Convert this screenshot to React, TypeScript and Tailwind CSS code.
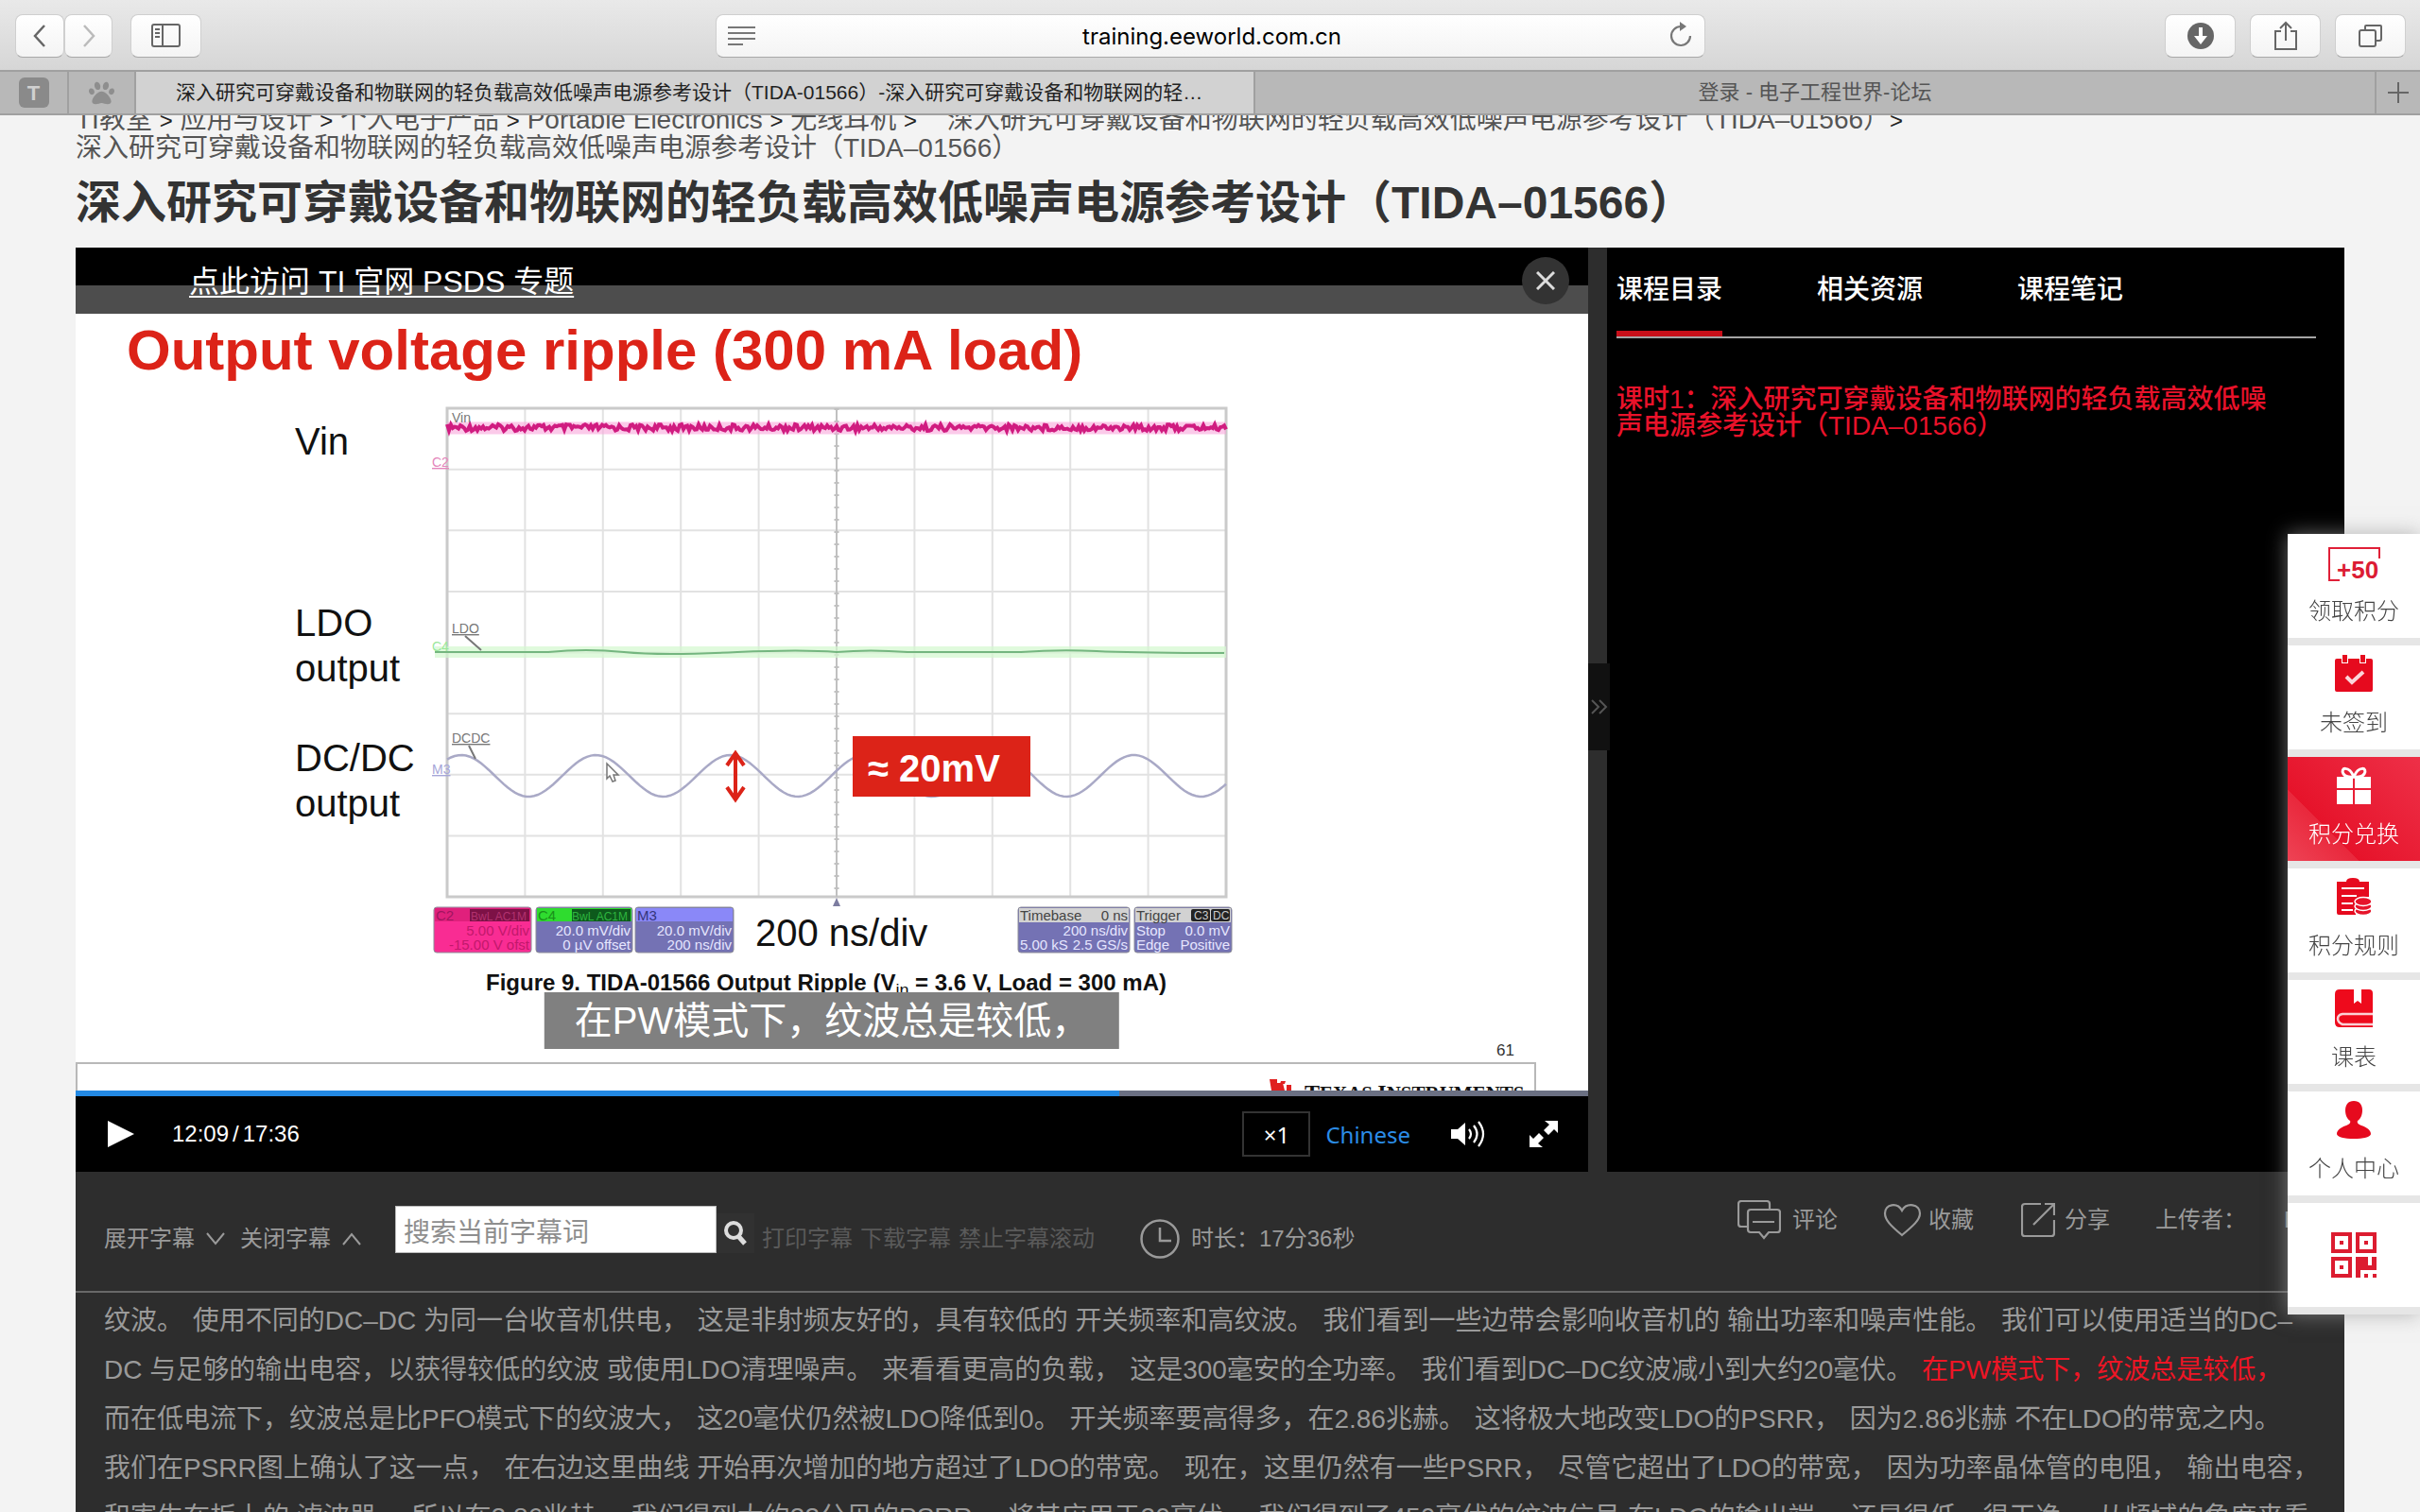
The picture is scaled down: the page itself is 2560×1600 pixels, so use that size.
import { FaPaw } from "react-icons/fa";

const GRID = { x: 393, y: 100, w: 824, h: 517, cols: 10, rows: 8 };

// steady pseudo noise for the supply trace
function noise(i: number): number {
  const v = Math.sin(i * 12.9898) * 43758.5453;
  return v - Math.floor(v);
}

function vinPath(): string {
  let d = "";
  for (let i = 0; i <= 412; i++) {
    d += `${i ? "L" : "M"}${GRID.x + i * 2} ${(117 + noise(i) * 7).toFixed(1)}`;
  }
  return d;
}

function dcdcPath(): string {
  let d = "";
  for (let x = GRID.x; x <= GRID.x + GRID.w; x += 4) {
    const y = 489 - 22 * Math.cos((2 * Math.PI * (x - 408)) / 142.3);
    d += `${x > GRID.x ? "L" : "M"}${x} ${y.toFixed(1)}`;
  }
  return d;
}

function range(n: number): number[] {
  return Array.from({ length: n }, (_, i) => i);
}

const boxes = [
  { x: 379, w: 103, head: "#e0207c", body: "#f92c93", left: "C2", ink: "#a01560", rows: ["5.00 V/div", "-15.00 V ofst"] },
  { x: 487, w: 102, head: "#2fdc2f", body: "#7472b4", left: "C4", ink: "#1a8f1a", rows: ["20.0 mV/div", "0 µV offset"] },
  { x: 592, w: 104, head: "#8a88f8", body: "#7472b4", left: "M3", ink: "#35357a", rows: ["20.0 mV/div", "200 ns/div"] },
];

function Slide() {
  return (
    <svg
      viewBox="0 0 1600 822"
      className="block w-full bg-white"
      fontFamily="'Liberation Sans', sans-serif"
      role="img"
      aria-label="Output voltage ripple (300 mA load)"
    >
      <text x="54" y="59" fontSize="60" fontWeight="700" fill="#dc2318">
        Output voltage ripple (300 mA load)
      </text>
      <g fontSize="40" fill="#111">
        <text x="232" y="149">Vin</text>
        <text x="232" y="341">LDO</text>
        <text x="232" y="389">output</text>
        <text x="232" y="484">DC/DC</text>
        <text x="232" y="532">output</text>
        <text x="719" y="669">200 ns/div</text>
      </g>

      <g stroke="#e2e2e2" strokeWidth="2">
        {range(GRID.cols - 1).map((i) => {
          const x = GRID.x + ((i + 1) * GRID.w) / GRID.cols;
          return <line key={i} x1={x} x2={x} y1={GRID.y} y2={GRID.y + GRID.h} />;
        })}
        {range(GRID.rows - 1).map((i) => {
          const y = GRID.y + ((i + 1) * GRID.h) / GRID.rows;
          return <line key={i} y1={y} y2={y} x1={GRID.x} x2={GRID.x + GRID.w} />;
        })}
      </g>
      <rect x={GRID.x} y={GRID.y} width={GRID.w} height={GRID.h} fill="none" stroke="#cacaca" strokeWidth="3" />
      <line x1="805" x2="805" y1="100" y2="617" stroke="#c0c0c0" strokeWidth="2" />
      <line x1="805" x2="805" y1="100" y2="617" stroke="#c0c0c0" strokeWidth="5" strokeDasharray="2 11" />
      <path d="M805 618l-4 9h8z" fill="#7c7ca0" />

      <path d="M393 121H1217" stroke="#f9a8dc" strokeWidth="13" opacity="0.6" />
      <path d={vinPath()} fill="none" stroke="#d01c80" strokeWidth="4" />
      <path d="M380 358H1217" stroke="#d4f8d0" strokeWidth="12" opacity="0.7" />
      <path
        d="M380 358H500Q540 354 580 358T700 358Q770 355 805 358Q840 355 880 358H1000Q1040 355 1080 357T1215 359"
        fill="none"
        stroke="#74b67f"
        strokeWidth="2"
      />
      <path d={dcdcPath()} fill="none" stroke="#a9a9c6" strokeWidth="2.5" />

      <g fontSize="14" fill="#777">
        <text x="398" y="115">Vin</text>
        <text x="398" y="338" textDecoration="underline">LDO</text>
        <text x="398" y="454" textDecoration="underline">DCDC</text>
        <text x="377" y="162" fill="#e486bb" textDecoration="underline">C2</text>
        <text x="377" y="357" fill="#9ae89a">C4</text>
        <text x="377" y="487" fill="#a6a6d8" textDecoration="underline">M3</text>
      </g>
      <path d="M412 341L429 356M416 457L423 471" stroke="#777" strokeWidth="2" />

      <g fill="none" stroke="#dc2318" strokeWidth="4">
        <path d="M698 466V513" />
        <path d="M689 478l9-13 9 13M689 501l9 13 9-13" />
      </g>
      <path d="M562 476v16l3-3 3 6 3-1-2-6h5z" fill="#fff" stroke="#777" strokeWidth="1.5" />
      <rect x="822" y="447" width="188" height="64" fill="#dc2318" />
      <text x="838" y="495" fontSize="40" fontWeight="700" fill="#fff">≈ 20mV</text>

      {boxes.map((b) => (
        <g key={b.left} fontSize="15">
          <rect x={b.x} y="628" width={b.w} height="48" rx="3" fill={b.body} stroke="#8c8c98" />
          <rect x={b.x + 1} y="629" width={b.w - 2} height="14" fill={b.head} />
          {b.left !== "M3" && (
            <>
              <rect x={b.x + 38} y="630" width={b.w - 40} height="13" fill={b.left === "C2" ? "#7d1146" : "#0d5a1c"} />
              <text x={b.x + b.w - 5} y="642" textAnchor="end" fontSize="12" fill={b.left === "C2" ? "#b2316f" : "#2fb53f"}>
                BwL AC1M
              </text>
            </>
          )}
          <text x={b.x + 2} y="642" fill={b.ink}>{b.left}</text>
          <g fill={b.left === "C2" ? "#c2186c" : "#e6e6ff"} textAnchor="end">
            <text x={b.x + b.w - 2} y="658">{b.rows[0]}</text>
            <text x={b.x + b.w - 2} y="673">{b.rows[1]}</text>
          </g>
        </g>
      ))}
      <g fontSize="15">
        <rect x="997" y="628" width="118" height="48" rx="3" fill="#7472b4" stroke="#8c8c98" />
        <rect x="998" y="629" width="116" height="15" fill="#d2d2d2" />
        <rect x="1120" y="628" width="103" height="48" rx="3" fill="#7472b4" stroke="#8c8c98" />
        <rect x="1121" y="629" width="101" height="15" fill="#d2d2d2" />
        <rect x="1180" y="630" width="20" height="13" rx="2" fill="#222" />
        <rect x="1201" y="630" width="20" height="13" rx="2" fill="#222" />
        <g fill="#444">
          <text x="999" y="642">Timebase</text>
          <text x="1113" y="642" textAnchor="end">0 ns</text>
          <text x="1122" y="642">Trigger</text>
        </g>
        <g fill="#ccc" fontSize="12">
          <text x="1183" y="641">C3</text>
          <text x="1203" y="641">DC</text>
        </g>
        <g fill="#e6e6ff">
          <text x="999" y="673">5.00 kS</text>
          <text x="1122" y="658">Stop</text>
          <text x="1122" y="673">Edge</text>
          <g textAnchor="end">
            <text x="1113" y="658">200 ns/div</text>
            <text x="1113" y="673">2.5 GS/s</text>
            <text x="1221" y="658">0.0 mV</text>
            <text x="1221" y="673">Positive</text>
          </g>
        </g>
      </g>

      <text x="434" y="716" fontSize="24" fontWeight="700" fill="#111">
        Figure 9. TIDA-01566 Output Ripple (V
        <tspan fontSize="18" fontWeight="400" dy="6">in</tspan>
        <tspan dy="-6"> = 3.6 V, Load = 300 mA)</tspan>
      </text>
      <text x="1503" y="785" fontSize="17" fill="#333">61</text>
      <path d="M1 822V793H1544V822" fill="none" stroke="#b8b8b8" strokeWidth="2" />
      <path d="M1263 810h8v4h6l2 8h-14zM1281 816h5v6h-5z" fill="#e02020" />
      <path d="M1275 812h5l-1 3h-5z" fill="#e02020" />
      <g fontFamily="'Liberation Serif', serif" fontWeight="700" fill="#111">
        <text x="1300" y="832" fontSize="24">
          T<tspan fontSize="21">EXAS </tspan>I<tspan fontSize="21">NSTRUMENTS</tspan>
        </text>
      </g>
    </svg>
  );
}

function BrowserBar() {
  const button =
    "flex h-[46px] items-center justify-center rounded-[8px] border border-[#cfcfcf] border-b-[#a8a8a8] bg-gradient-to-b from-white to-[#f4f4f4]";
  return (
    <header className="relative z-10 shrink-0">
      <div className="grid h-[74px] grid-cols-[1fr_minmax(0,1047px)_1fr] items-center bg-gradient-to-b from-[#e9e9e9] to-[#d6d6d6] pt-[2px]">
        <div className="flex pl-4">
          <button aria-label="后退" className={`${button} w-[52px]`}>
            <svg width="16" height="28" fill="none" stroke="#666" strokeWidth="2.5"><path d="M13 3L3 14l10 11" /></svg>
          </button>
          <button aria-label="前进" className={`${button} w-[51px]`}>
            <svg width="16" height="28" fill="none" stroke="#bbb" strokeWidth="2.5"><path d="M3 3l10 11L3 25" /></svg>
          </button>
          <button aria-label="边栏" className={`${button} ml-[19px] w-[75px]`}>
            <svg width="32" height="26" fill="none" stroke="#666" strokeWidth="2">
              <rect x="1" y="1" width="29" height="23" rx="2" />
              <path d="M12 1v23M4 6h5M4 10h5M4 14h5" />
            </svg>
          </button>
        </div>
        <div className={`${button} px-3`}>
          <svg width="30" height="22" stroke="#777" strokeWidth="2"><path d="M0 2h29M0 8h29M0 14h29M0 20h16" /></svg>
          <input
            aria-label="地址"
            defaultValue="training.eeworld.com.cn"
            className="min-w-0 flex-1 bg-transparent pt-0.5 text-center font-['Inter',sans-serif] text-[24px] leading-[32px] text-black outline-none"
          />
          <button aria-label="重新载入">
            <svg width="26" height="30" fill="none" stroke="#777" strokeWidth="2.2">
              <path d="M23 15a10 10 0 1 1-10-10h2" />
              <path d="M12 0l7 5-7 5z" fill="#777" stroke="none" />
            </svg>
          </button>
        </div>
        <div className="flex justify-end gap-[15px] pr-[15px]">
          <button aria-label="下载" className={`${button} w-[75px]`}>
            <svg width="30" height="30"><circle cx="15" cy="15" r="14" fill="#666" /><path d="M13 6h4v9h5l-7 9-7-9h5z" fill="#fff" /></svg>
          </button>
          <button aria-label="共享" className={`${button} w-[75px]`}>
            <svg width="26" height="32" fill="none" stroke="#666" strokeWidth="2">
              <path d="M8 11H2v19h22V11h-6M13 21V3M7 8l6-6 6 6" />
            </svg>
          </button>
          <button aria-label="标签页" className={`${button} w-[75px]`}>
            <svg width="28" height="26" fill="none" stroke="#666" strokeWidth="2">
              <rect x="2" y="7" width="17" height="17" rx="2" />
              <path d="M8 7V3q0-1 1-1h15q1 0 1 1v13q0 2-2 2h-4" />
            </svg>
          </button>
        </div>
      </div>
      <div className="grid h-12 grid-cols-[73px_71px_minmax(0,1fr)_minmax(0,1fr)_48px] border-y-2 border-[#a0a0a0] bg-[#b8b8b8]">
        <a href="#t" className="flex items-center justify-center border-r-2 border-[#a0a0a0]">
          <span className="flex h-8 w-8 items-center justify-center rounded-[6px] bg-[#8a8a8a] text-[22px] font-bold text-[#d0d0d0]">T</span>
        </a>
        <a href="#baidu" aria-label="百度" className="flex items-center justify-center border-r-2 border-[#a0a0a0]">
          <FaPaw size={27} color="#8e8e8e" />
        </a>
        <a href="#course" className="truncate border-r-2 border-[#a0a0a0] bg-[#d2d2d2] px-[42px] text-[21px] leading-[44px] text-[#222]">
          深入研究可穿戴设备和物联网的轻负载高效低噪声电源参考设计（TIDA-01566）-深入研究可穿戴设备和物联网的轻…
        </a>
        <a href="#forum" className="truncate text-center text-[22px] leading-[44px] text-[#555]">
          登录 - 电子工程世界-论坛
        </a>
        <button aria-label="新标签页" className="flex items-center justify-center border-l-2 border-[#a0a0a0]">
          <svg width="22" height="22" stroke="#666" strokeWidth="2"><path d="M11 0v22M0 11h22" /></svg>
        </button>
      </div>
    </header>
  );
}

const crumbs = ["TI教室", "应用与设计", "个人电子产品", "Portable Electronics", "无线耳机"];

function Arrow() {
  return <span className="text-[24px] leading-none text-[#222]">&gt;</span>;
}

function Breadcrumb() {
  return (
    <nav className="-mt-2.5 text-[28px] leading-[30px] text-[#555]">
      {crumbs.map((c) => (
        <span key={c}>
          <a href="#crumb">{c}</a> <Arrow />{" "}
        </span>
      ))}
      <a href="#crumb" className="ml-6">深入研究可穿戴设备和物联网的轻负载高效低噪声电源参考设计（TIDA–01566）</a>
      <Arrow />
      <br />
      深入研究可穿戴设备和物联网的轻负载高效低噪声电源参考设计（TIDA–01566）
    </nav>
  );
}

function Player() {
  return (
    <section className="relative bg-black">
      <div className="h-10" />
      <div className="h-[30px] bg-[#4d4d4d]" />
      <a href="#psds" className="absolute top-4 left-[120px] text-[32px] leading-[40px] text-white underline decoration-2 underline-offset-4">
        点此访问 TI 官网 PSDS 专题
      </a>
      <button aria-label="关闭" className="absolute top-2.5 right-5 flex h-[50px] w-[50px] items-center justify-center rounded-full bg-[#333]">
        <svg width="20" height="20" stroke="#ddd" strokeWidth="3"><path d="M1 1l18 18M19 1L1 19" /></svg>
      </button>
      <div className="relative">
        <Slide />
        <p className="absolute bottom-11 left-1/2 -translate-x-1/2 bg-[#808080] px-8 text-[40px] leading-[60px] whitespace-nowrap text-white">
          在PW模式下，纹波总是较低，
        </p>
      </div>
      <div className="h-1.5 bg-[#6b7083]">
        <div className="h-full w-[69%] bg-[#2389e3]" />
      </div>
      <div className="flex h-20 items-center pr-8 pl-[34px] text-[24px] text-white">
        <button aria-label="播放">
          <svg width="28" height="28" fill="#fff"><path d="M0 0l28 14L0 28z" /></svg>
        </button>
        <span className="ml-10">12:09</span>
        <span className="mx-1">/</span>
        <span>17:36</span>
        <div className="ml-auto flex items-center font-['Noto_Sans',sans-serif]">
          <button className="h-12 w-[72px] border-2 border-[#333] pt-0.5">×1</button>
          <button className="ml-4 pt-0.5 text-[#2b8ce6]">Chinese</button>
          <button aria-label="音量" className="ml-[43px]">
            <svg width="36" height="30" fill="none" stroke="#fff" strokeWidth="2.2">
              <path d="M0 10h7l8-7v24l-8-7H0z" fill="#fff" stroke="none" />
              <path d="M19 10q4 5 0 10M24 6q7 9 0 18M29 2q10 13 0 26" />
            </svg>
          </button>
          <button aria-label="全屏" className="ml-[47px]">
            <svg width="30" height="28" fill="#fff">
              <path d="M16 0h14v13l-4-4-6 6-5-5 6-6zM14 28H0V15l4 4 6-6 5 5-6 6z" />
            </svg>
          </button>
        </div>
      </div>
    </section>
  );
}

function Catalog() {
  return (
    <section className="bg-black pr-[30px] pl-2.5">
      <div className="flex gap-[100px] border-b-2 border-[#a5a5a5] pt-[26px] text-[28px] leading-[38px] font-medium text-white" role="tablist">
        <button role="tab" aria-selected="true" className="border-b-6 border-[#c80f19] pb-6">课程目录</button>
        <button role="tab" className="border-b-6 border-transparent pb-6">相关资源</button>
        <button role="tab" className="border-b-6 border-transparent pb-6">课程笔记</button>
      </div>
      <a href="#lesson1" className="mt-[51px] mr-10 block text-[28px] leading-[28px] font-medium text-[#e9122a]">
        课时1：深入研究可穿戴设备和物联网的轻负载高效低噪声电源参考设计（TIDA–01566）
      </a>
    </section>
  );
}

function Toolbar() {
  return (
    <div className="flex h-[128px] items-start justify-between border-b-2 border-[#686868] pr-[34px] pl-[30px] text-[24px] leading-[36px] text-[#9a9a9a]">
      <div className="flex items-center pt-[30px]">
        <div className="flex items-center gap-3 pt-5">
          <button className="flex items-center gap-3">
            展开字幕
            <svg width="20" height="14" fill="none" stroke="#9a9a9a" strokeWidth="2"><path d="M1 1l9 11 9-11" /></svg>
          </button>
          <button className="ml-1 flex items-center gap-3">
            关闭字幕
            <svg width="20" height="14" fill="none" stroke="#9a9a9a" strokeWidth="2"><path d="M1 13l9-11 9 11" /></svg>
          </button>
        </div>
        <input
          aria-label="搜索当前字幕词"
          placeholder="搜索当前字幕词"
          className="ml-9 h-[50px] w-[340px] border border-[#bbb] bg-white px-2 pt-2 text-[28px] leading-[40px] outline-none placeholder:text-[#8e8e8e]"
        />
        <button aria-label="搜索" className="mt-2 flex h-[42px] w-10 items-center justify-center bg-[#313131]">
          <svg width="26" height="28" fill="none" stroke="#ddd" strokeWidth="4">
            <circle cx="11" cy="11" r="8" />
            <path d="M16 17l7 8" strokeWidth="5" />
          </svg>
        </button>
        <div className="flex gap-2 pt-5 pl-2 text-[#5a5a5a]">
          <button>打印字幕</button>
          <button>下载字幕</button>
          <button>禁止字幕滚动</button>
        </div>
        <div className="flex items-center gap-3 pt-5 pl-12">
          <svg width="42" height="42" fill="none" stroke="#9a9a9a" strokeWidth="2.5">
            <circle cx="21" cy="21" r="19.5" />
            <path d="M21 9v14h12" />
          </svg>
          时长：17分36秒
        </div>
      </div>
      <div className="flex items-center pt-[30px]">
        <button className="flex items-center gap-3">
          <svg width="46" height="42" fill="none" stroke="#9a9a9a" strokeWidth="2.2">
            <path d="M10 28H4q-3 0-3-3V4q0-3 3-3h27q3 0 3 3v6" />
            <path d="M11 13q0-3 3-3h28q3 0 3 3v18q0 3-3 3h-9l-5 6-5-6h-9q-3 0-3-3zM16 23h23" />
          </svg>
          评论
        </button>
        <button className="ml-[48px] flex items-center gap-[7px]">
          <svg width="41" height="36" fill="none" stroke="#9a9a9a" strokeWidth="2.2">
            <path d="M20 34C8 24 2 18 2 11 2 1 15-1 20 8 25-1 39 1 39 11c0 7-7 13-19 23z" />
          </svg>
          收藏
        </button>
        <button className="ml-[50px] flex items-center gap-2.5">
          <svg width="36" height="38" fill="none" stroke="#9a9a9a" strokeWidth="2.2">
            <path d="M21 2H4Q1 2 1 5v28q0 3 3 3h28q3 0 3-3V19M25 2h10v12M35 2L13 24" />
          </svg>
          分享
        </button>
        <span className="ml-[48px]">上传者：</span>
        <span className="ml-10 w-[30px]">E</span>
      </div>
    </div>
  );
}

type Cue = { text: string; active?: boolean };

const cues: Cue[][] = [
  [
    { text: "纹波。" },
    { text: "使用不同的DC–DC 为同一台收音机供电，" },
    { text: "这是非射频友好的，具有较低的 开关频率和高纹波。" },
    { text: "我们看到一些边带会影响收音机的 输出功率和噪声性能。" },
    { text: "我们可以使用适当的DC–" },
  ],
  [
    { text: "DC 与足够的输出电容，以获得较低的纹波 或使用LDO清理噪声。" },
    { text: "来看看更高的负载，" },
    { text: "这是300毫安的全功率。" },
    { text: "我们看到DC–DC纹波减小到大约20毫伏。" },
    { text: "在PW模式下，纹波总是较低，", active: true },
  ],
  [
    { text: "而在低电流下，纹波总是比PFO模式下的纹波大，" },
    { text: "这20毫伏仍然被LDO降低到0。" },
    { text: "开关频率要高得多，在2.86兆赫。" },
    { text: "这将极大地改变LDO的PSRR，" },
    { text: "因为2.86兆赫 不在LDO的带宽之内。" },
  ],
  [
    { text: "我们在PSRR图上确认了这一点，" },
    { text: "在右边这里曲线 开始再次增加的地方超过了LDO的带宽。" },
    { text: "现在，这里仍然有一些PSRR，" },
    { text: "尽管它超出了LDO的带宽，" },
    { text: "因为功率晶体管的电阻，" },
    { text: "输出电容，" },
  ],
  [
    { text: "和寄生在板上的 滤波器。" },
    { text: "所以在2.86兆赫，" },
    { text: "我们得到大约33分贝的PSRR，" },
    { text: "将其应用于20毫伏，" },
    { text: "我们得到了450毫伏的纹波信号 在LDO的输出端，" },
    { text: "还是很低，很干净。" },
    { text: "从频域的角度来看" },
  ],
];

function Transcript() {
  return (
    <div className="overflow-hidden pt-1 pl-[30px] text-[28px] leading-[52px] whitespace-nowrap text-[#9a9a9a]">
      {cues.map((line, i) => (
        <p key={i}>
          {line.map((cue) => (
            <span key={cue.text} className={cue.active ? "mr-0.5 text-[#ee1525]" : "mr-0.5"}>
              {cue.text}{" "}
            </span>
          ))}
        </p>
      ))}
    </div>
  );
}

const menu = [
  {
    label: "领取积分",
    icon: (
      <svg width="58" height="40">
        <path d="M14 39H3V5h53v11" fill="none" stroke="#e02038" strokeWidth="2" />
        <text x="11" y="37" fontSize="26" fontWeight="700" fill="#dc1c34">+50</text>
      </svg>
    ),
  },
  {
    label: "未签到",
    icon: (
      <svg width="40" height="40">
        <path d="M0 6q0-2 2-2h5v5h7V4h12v5h7V4h5q2 0 2 2v31q0 2-2 2H2q-2 0-2-2z" fill="#e60a1e" />
        <path d="M8 0h5v8H8zM27 0h5v8h-5z" fill="#e60a1e" />
        <path d="M12 23l6 6 12-11" fill="none" stroke="#fbd6da" strokeWidth="4" />
      </svg>
    ),
  },
  {
    label: "积分兑换",
    icon: (
      <svg width="38" height="42" fill="#fff">
        <path d="M1 12h17v12H1zM20 12h17v12H20zM1 26h17v15H1zM20 26h17v15H20z" />
        <path d="M19 12C14 0 4 2 8 9q3 4 11 3C24 0 34 2 30 9q-3 4-11 3" fill="none" stroke="#fff" strokeWidth="3" />
      </svg>
    ),
  },
  {
    label: "积分规则",
    icon: (
      <svg width="38" height="42">
        <path d="M1 5h10q0-4 7-4t7 4h10v16q-12 1-14 6v13H3q-2 0-2-2z" fill="#e60a1e" />
        <path d="M6 12h24M6 20h16M6 28h12M6 35h12" stroke="#fff" strokeWidth="2" />
        <g fill="#e6142a" stroke="#fff" strokeWidth="1.5">
          <ellipse cx="29" cy="36" rx="9" ry="4.5" />
          <ellipse cx="29" cy="31" rx="9" ry="4.5" />
          <ellipse cx="29" cy="26" rx="9" ry="4.5" />
        </g>
      </svg>
    ),
  },
  {
    label: "课表",
    icon: (
      <svg width="40" height="40">
        <path d="M5 0h15v15l4-3 4 3V0h8q4 0 4 4v36H5q-5 0-5-5V5q0-5 5-5z" fill="#ee0a1c" />
        <path d="M40 26H8q-5 1-5 5t5 6h32" fill="none" stroke="#fbd0d4" strokeWidth="2.5" />
      </svg>
    ),
  },
  {
    label: "个人中心",
    icon: (
      <svg width="36" height="40" fill="#e60a1e">
        <path d="M18 0c-6 0-9 4-9 10 0 5 2 9 5 11 1 2-1 4-4 5-6 2-10 5-10 9 0 3 8 5 18 5s18-2 18-5c0-4-4-7-10-9-3-1-5-3-4-5 3-2 5-6 5-11 0-6-3-10-9-10z" />
      </svg>
    ),
  },
];

function SideMenu() {
  return (
    <aside className="fixed top-[565px] right-0 flex w-[140px] flex-col gap-2 bg-[#e6e6e6] pb-2 font-light shadow-[0_0_20px_#999999b0]">
      {menu.map((m) => (
        <a
          key={m.label}
          href="#menu"
          className={
            m.label === "积分兑换"
              ? "flex h-[110px] flex-col items-center bg-[linear-gradient(45deg,#ee4355_0,#e9283c_30%,#e6132a_30%,#ee3048_100%)] pt-2.5 text-[24px] leading-[32px] text-white"
              : "flex h-[110px] flex-col items-center bg-white pt-2.5 text-[24px] leading-[32px] text-[#444]"
          }
        >
          <span className="flex h-10 items-center">{m.icon}</span>
          <span className="mt-4">{m.label}</span>
        </a>
      ))}
      <a href="#qr" aria-label="二维码" className="flex h-[110px] items-center justify-center bg-white">
        <svg width="50" height="50" fill="none" stroke="#dc1c30" strokeWidth="4">
          <path d="M3 3h18v18H3zM29 3h18v18H29zM3 29h18v18H3z" />
          <path d="M10 10h4v4h-4zM36 10h4v4h-4zM10 36h4v4h-4z" fill="#dc1c30" stroke="none" />
          <path d="M27 27h13v9h4v-9h5v14H32v8h-5zM36 45h4v4h-4zM45 45h4v4h-4z" fill="#dc1c30" stroke="none" />
        </svg>
      </a>
    </aside>
  );
}

export default function App() {
  return (
    <div className="flex h-screen flex-col overflow-hidden bg-[#f3f3f3] font-['Liberation_Sans','Noto_Sans_CJK_SC',sans-serif]">
      <BrowserBar />
      <main className="min-h-0 flex-1 px-20">
        <Breadcrumb />
        <h1 className="mb-1 text-[48px] leading-[86px] font-semibold text-[#333]">
          深入研究可穿戴设备和物联网的轻负载高效低噪声电源参考设计（TIDA–01566）
        </h1>
        <div className="h-full bg-[#2d2d2d]">
          <div className="grid grid-cols-[1600fr_20px_780fr]">
            <Player />
            <div className="relative">
              <button aria-label="收起目录" className="absolute top-[440px] left-0 flex h-[92px] w-[23px] items-center justify-center bg-[#111]">
                <svg width="18" height="16" fill="none" stroke="#555" strokeWidth="2"><path d="M1 1l7 7-7 7M9 1l7 7-7 7" /></svg>
              </button>
            </div>
            <Catalog />
          </div>
          <Toolbar />
          <Transcript />
        </div>
      </main>
      <SideMenu />
    </div>
  );
}
